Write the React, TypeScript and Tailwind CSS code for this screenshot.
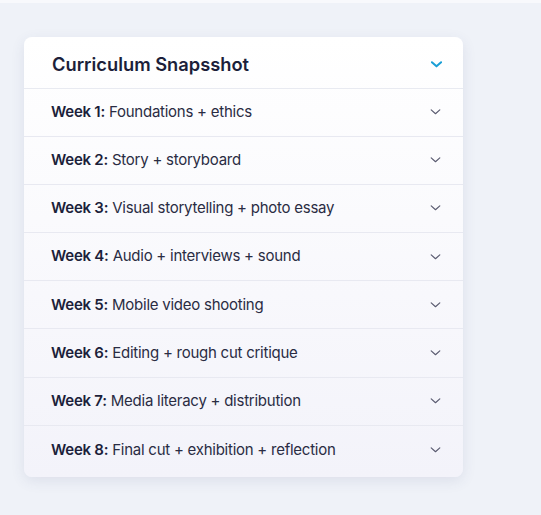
const weeks = [
  { n: 1, title: "Foundations + ethics" },
  { n: 2, title: "Story + storyboard" },
  { n: 3, title: "Visual storytelling + photo essay" },
  { n: 4, title: "Audio + interviews + sound" },
  { n: 5, title: "Mobile video shooting" },
  { n: 6, title: "Editing + rough cut critique" },
  { n: 7, title: "Media literacy + distribution" },
  { n: 8, title: "Final cut + exhibition + reflection" },
];

function Chevron({ className, width = 1.6 }: { className?: string; width?: number }) {
  return (
    <svg viewBox="0 0 12 7" className={className} fill="none">
      <path d="M1 1l5 4.5L11 1" stroke="currentColor" strokeWidth={width} strokeLinecap="round" strokeLinejoin="round" />
    </svg>
  );
}

export default function App() {
  return (
    <div
      className="min-h-[515px] w-[541px] bg-[#eff2f8] border-t-[3px] border-[#f8f9fc] pt-[34px] pl-[24px]"
      style={{ fontFamily: "Inter, 'Noto Sans', sans-serif" }}
    >
      <div className="w-[439px] rounded-lg bg-gradient-to-b from-white to-[#f3f3fa] shadow-[0_4px_14px_rgba(60,70,120,0.10)] overflow-hidden">
        {/* Header */}
        <div className="h-[51.5px] pt-[5px] flex items-center justify-between pl-[28px] pr-[21px] border-b border-[#e8eaf1]">
          <h2 className="text-[18.3px] font-semibold text-[#1c1f3a]">Curriculum Snapsshot</h2>
          <Chevron className="w-[11px] h-[7px] text-[#1a9fd6]" width={2.2} />
        </div>

        {weeks.map((w, i) => (
          <div
            key={w.n}
            className={`flex items-center justify-between pl-[27px] pr-[22px] ${
              i < weeks.length - 1 ? "h-[48.2px] border-b border-[#e8e9f1]" : "h-[51px] pb-[3px]"
            }`}
          >
            <p className="text-[15px] tracking-[-0.25px] text-[#2a2c43]">
              <span className="font-semibold text-[#1c1f3a]">Week {w.n}:</span> {w.title}
            </p>
            <Chevron className="w-[11px] h-[6px] text-[#5a5b70]" width={1.4} />
          </div>
        ))}
      </div>
    </div>
  );
}
